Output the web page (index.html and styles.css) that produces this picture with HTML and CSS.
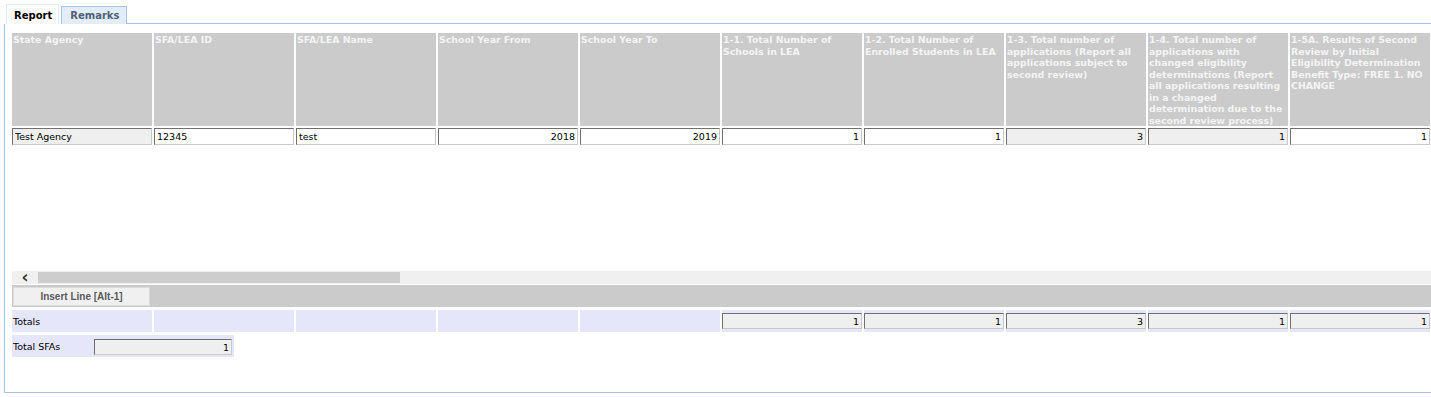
FILE: index.html
```html
<!DOCTYPE html>
<html lang="en">
<head>
    <meta charset="UTF-8">
    <title>Second Review Report</title>
    <link rel="stylesheet" href="styles.css">
</head>
<body>
<div class="tabs">
    <div class="tab active">Report</div>
    <div class="tab">Remarks</div>
    <div class="tab-fill"></div>
</div>
<div class="panel">
    <div class="grid-area">
        <table class="report-table">
            <thead>
            <tr>
                <th><div class="th-text">State Agency</div></th>
                <th><div class="th-text">SFA/LEA ID</div></th>
                <th><div class="th-text">SFA/LEA Name</div></th>
                <th><div class="th-text">School Year From</div></th>
                <th><div class="th-text">School Year To</div></th>
                <th><div class="th-text">1-1. Total Number of Schools in LEA</div></th>
                <th><div class="th-text">1-2. Total Number of Enrolled Students in LEA</div></th>
                <th><div class="th-text">1-3. Total number of applications (Report all applications subject to second review)</div></th>
                <th><div class="th-text">1-4. Total number of applications with changed eligibility determinations (Report all applications resulting in a changed determination due to the second review process)</div></th>
                <th><div class="th-text">1-5A. Results of Second Review by Initial Eligibility Determination Benefit Type: FREE 1. NO CHANGE</div></th>
                <th><div class="th-text"></div></th>
            </tr>
            </thead>
            <tbody>
            <tr>
                <td><input class="ro" type="text" value="Test Agency" readonly></td>
                <td><input type="text" value="12345"></td>
                <td><input type="text" value="test"></td>
                <td><input class="num" type="text" value="2018"></td>
                <td><input class="num" type="text" value="2019"></td>
                <td><input class="num" type="text" value="1"></td>
                <td><input class="num" type="text" value="1"></td>
                <td><input class="num ro" type="text" value="3" readonly></td>
                <td><input class="num ro" type="text" value="1" readonly></td>
                <td><input class="num" type="text" value="1"></td>
                <td><input type="text" value=""></td>
            </tr>
            </tbody>
        </table>
    </div>
    <div class="hscroll">
        <span class="arrow">&#8249;</span>
        <div class="thumb"></div>
    </div>
    <div class="action-bar">
        <button class="insert-btn">Insert Line [Alt-1]</button>
    </div>
    <div class="totals-row">
        <div class="tcell label">Totals</div>
        <div class="tcell"></div>
        <div class="tcell"></div>
        <div class="tcell"></div>
        <div class="tcell"></div>
        <div class="tcell"><input class="num ro" type="text" value="1" readonly></div>
        <div class="tcell"><input class="num ro" type="text" value="1" readonly></div>
        <div class="tcell"><input class="num ro" type="text" value="3" readonly></div>
        <div class="tcell"><input class="num ro" type="text" value="1" readonly></div>
        <div class="tcell"><input class="num ro" type="text" value="1" readonly></div>
        <div class="tcell"><input class="ro" type="text" value="" readonly></div>
    </div>
    <div class="sfa-row">
        <div class="sfa-label">Total SFAs</div>
        <div class="sfa-value"><input class="num ro" type="text" value="1" readonly></div>
    </div>
</div>
</body>
</html>
```

FILE: styles.css
```css
body {
    font-family: 'DejaVu Sans', Verdana, sans-serif;
    font-size: 9.5px;
    background-color: #FFFFFF;
    color: black;
    margin: 0;
    padding: 5px 0 0 4px;
    overflow: hidden;
}

.tabs {
    display: flex;
    align-items: flex-end;
    height: 19px;
}

.tab {
    height: 17px;
    line-height: 18px;
    padding: 0 7px 0 8px;
    font-weight: bold;
    font-size: 10px;
    color: #4f6079;
    background-color: #e4ecf8;
    border: 1px solid #a9c3e4;
    border-bottom: none;
    margin-left: 2px;
}

.tab.active {
    height: 19px;
    line-height: 21px;
    color: #000000;
    background-color: #FFFFFF;
    border-color: #e3e9f3;
    margin-left: 2px;
    padding: 0 6px 0 7px;
}

.tab-fill {
    flex: 1;
    border-bottom: 1px solid #a9c3e4;
}

.panel {
    border-left: 1px solid #a9c3e4;
    border-bottom: 1px solid #a9c3e4;
    height: 361px;
    padding: 7px 0 0 5px;
    box-sizing: content-box;
}

.grid-area {
    height: 240px;
    overflow: hidden;
}

.report-table {
    border-collapse: separate;
    border-spacing: 2px;
    table-layout: fixed;
}

.report-table th {
    width: 140px;
    min-width: 140px;
    max-width: 140px;
    padding: 0;
    background-color: #cbcbcb;
    vertical-align: top;
}

.th-text {
    height: 93px;
    overflow: hidden;
    padding: 1px 1px 0;
    box-sizing: border-box;
    color: #f4f4f4;
    font-size: 9.4px;
    font-weight: bold;
    text-align: left;
    line-height: 11.5px;
}

.report-table td {
    padding: 0;
    height: 17px;
}

input {
    font-family: 'DejaVu Sans', Verdana, sans-serif;
    font-size: 9.5px;
    width: 140px;
    height: 17px;
    box-sizing: border-box;
    margin: 0;
    padding: 0 2px;
    background-color: #FFFFFF;
    border: 1px solid #c8c8c8;
    border-top-color: #6f6f6f;
    border-left-color: #6f6f6f;
    outline: none;
}

input.ro {
    background-color: #efefef;
}

input.num {
    text-align: right;
}

.hscroll {
    margin-left: 2px;
    height: 13px;
    background-color: #f0f0f0;
    display: flex;
    align-items: center;
}

.hscroll .arrow {
    width: 26px;
    text-align: center;
    font-size: 17px;
    font-weight: bold;
    line-height: 13px;
    color: #333333;
}

.hscroll .thumb {
    width: 362px;
    height: 11px;
    background-color: #cdcdcd;
}

.action-bar {
    margin: 1px 0 0 2px;
    height: 22px;
    background-color: #cbcbcb;
    display: flex;
    align-items: center;
}

.insert-btn {
    font-family: 'Liberation Sans', Arial, sans-serif;
    font-size: 10px;
    font-weight: bold;
    color: #5a5a5a;
    background-color: #f0f0f0;
    border: 1px solid #dcdcdc;
    width: 137px;
    height: 19px;
    margin-left: 1px;
    padding: 0;
}

.totals-row {
    display: flex;
    gap: 2px;
    margin: 3px 0 0 2px;
}

.tcell {
    width: 140px;
    flex: 0 0 140px;
    height: 22px;
    background-color: #e6e6fa;
    padding-top: 3px;
    box-sizing: border-box;
}

.tcell.label {
    padding: 6px 0 0 1px;
}

.tcell input {
    height: 16px;
}

.sfa-row {
    display: flex;
    margin: 3px 0 0 2px;
}

.sfa-label {
    width: 80px;
    height: 22px;
    background-color: #e6e6fa;
    padding: 6px 0 0 1px;
    box-sizing: border-box;
}

.sfa-value {
    width: 142px;
    height: 22px;
    background-color: #e6e6fa;
    padding: 4px 0 0 2px;
    box-sizing: border-box;
}

.sfa-value input {
    width: 138px;
    height: 16px;
}
```
